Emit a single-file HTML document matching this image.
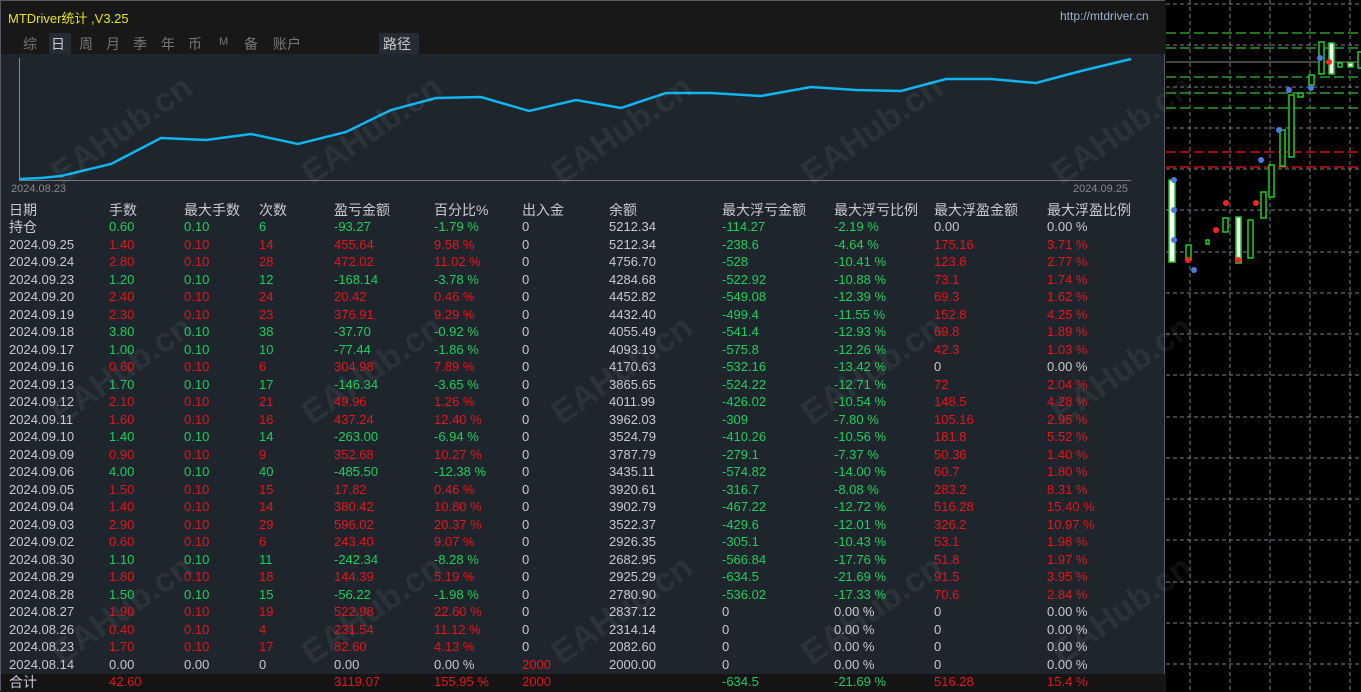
<!DOCTYPE html><html><head><meta charset="utf-8"><style>
*{margin:0;padding:0;box-sizing:border-box}
body{width:1361px;height:691px;background:#000;overflow:hidden;position:relative;font-family:"Liberation Sans","Noto Sans CJK SC",sans-serif;font-size:13px}
#p{position:absolute;left:0;top:0;width:1165px;height:691px;background:#1f252d;border:1px solid #55595f}
#tb{position:absolute;left:0;top:0;width:1165px;height:53px;background:#181818}
.t{position:absolute;white-space:nowrap}
.r{position:absolute;left:0;width:1165px;height:17.5px}
.r span{position:absolute;top:1px;line-height:16px}
.g{color:#19d05a}.d{color:#e8141a}.w{color:#c6cad2}
.wm{position:absolute;color:rgba(200,200,200,0.08);font-size:34px;font-weight:bold;transform:rotate(-35deg);white-space:nowrap}
</style></head><body>
<div id="p">
<div id="tb"></div>
<div class="t" style="left:7px;top:7px;color:#e6e600;font-size:13px">MTDriver统计 ,V3.25</div>
<div class="t" style="left:1059px;top:8px;color:#9bb4d0;font-size:12px">http://mtdriver.cn</div>
<div class="t" style="left:22px;top:33px;color:#777;font-size:14px;letter-spacing:0">综</div>
<div class="t" style="left:48px;top:32px;width:22px;height:21px;background:#262c36"></div>
<div class="t" style="left:50px;top:33px;color:#ccc;font-size:14px">日</div>
<div class="t" style="left:78px;top:33px;color:#777;font-size:14px">周</div>
<div class="t" style="left:105px;top:33px;color:#777;font-size:14px">月</div>
<div class="t" style="left:132px;top:33px;color:#777;font-size:14px">季</div>
<div class="t" style="left:160px;top:33px;color:#777;font-size:14px">年</div>
<div class="t" style="left:187px;top:33px;color:#777;font-size:14px">币</div>
<div class="t" style="left:218px;top:35px;color:#777;font-size:11px">M</div>
<div class="t" style="left:243px;top:33px;color:#777;font-size:14px">备</div>
<div class="t" style="left:272px;top:33px;color:#777;font-size:14px">账户</div>
<div class="t" style="left:378px;top:32px;width:40px;height:21px;background:#262c36"></div>
<div class="t" style="left:382px;top:33px;color:#ccc;font-size:14px">路径</div>
<svg class="t" style="left:0;top:0" width="1165" height="200">
<line x1="18.5" y1="57" x2="18.5" y2="180" stroke="#888" stroke-width="1"/>
<line x1="18" y1="179.5" x2="1130" y2="179.5" stroke="#777" stroke-width="1"/>
<polyline fill="none" stroke="#10b4f0" stroke-width="2.5" points="18,178 40,177 60,175 110,163 160,137 205,139 250,133 297,143 345,131 390,109 435,97 480,96 528,110 575,99 620,107 665,92 710,92 760,95 810,86 855,89 900,90 945,78 990,78 1035,82 1080,70 1130,58"/>
</svg>
<div class="t" style="left:10px;top:182px;color:#888;font-size:11px">2024.08.23</div>
<div class="t" style="left:1072px;top:182px;color:#888;font-size:11px">2024.09.25</div>
<div class="wm" style="left:40px;top:110px">EAHub.cn</div><div class="wm" style="left:290px;top:110px">EAHub.cn</div><div class="wm" style="left:540px;top:110px">EAHub.cn</div><div class="wm" style="left:790px;top:110px">EAHub.cn</div><div class="wm" style="left:1040px;top:110px">EAHub.cn</div>
<div class="wm" style="left:40px;top:350px">EAHub.cn</div><div class="wm" style="left:290px;top:350px">EAHub.cn</div><div class="wm" style="left:540px;top:350px">EAHub.cn</div><div class="wm" style="left:790px;top:350px">EAHub.cn</div><div class="wm" style="left:1040px;top:350px">EAHub.cn</div>
<div class="wm" style="left:40px;top:590px">EAHub.cn</div><div class="wm" style="left:290px;top:590px">EAHub.cn</div><div class="wm" style="left:540px;top:590px">EAHub.cn</div><div class="wm" style="left:790px;top:590px">EAHub.cn</div><div class="wm" style="left:1040px;top:590px">EAHub.cn</div>
<div class="r" style="top:673px;height:18px;background:#141414"></div>
<div id="rows"></div>
</div>
<svg style="position:absolute;left:1166px;top:0" width="195" height="691">
<g stroke="#7a8088" stroke-dasharray="4,3" stroke-width="1">
<line x1="24" y1="0" x2="24" y2="691"/><line x1="64" y1="0" x2="64" y2="691"/><line x1="104" y1="0" x2="104" y2="691"/><line x1="144" y1="0" x2="144" y2="691"/><line x1="184" y1="0" x2="184" y2="691"/>
<line x1="0" y1="4" x2="195" y2="4"/><line x1="0" y1="45" x2="195" y2="45"/><line x1="0" y1="87" x2="195" y2="87"/><line x1="0" y1="128" x2="195" y2="128"/><line x1="0" y1="169" x2="195" y2="169"/><line x1="0" y1="210" x2="195" y2="210"/><line x1="0" y1="252" x2="195" y2="252"/><line x1="0" y1="293" x2="195" y2="293"/><line x1="0" y1="334" x2="195" y2="334"/><line x1="0" y1="375" x2="195" y2="375"/><line x1="0" y1="417" x2="195" y2="417"/><line x1="0" y1="458" x2="195" y2="458"/><line x1="0" y1="499" x2="195" y2="499"/><line x1="0" y1="540" x2="195" y2="540"/><line x1="0" y1="582" x2="195" y2="582"/><line x1="0" y1="623" x2="195" y2="623"/><line x1="0" y1="664" x2="195" y2="664"/>
</g>
<g stroke="#2a9a2a" stroke-dasharray="10,4" stroke-width="1.5"><line x1="0" y1="33" x2="195" y2="33"/><line x1="0" y1="48" x2="195" y2="48"/><line x1="0" y1="77" x2="195" y2="77"/><line x1="0" y1="93" x2="195" y2="93"/><line x1="0" y1="108" x2="195" y2="108"/></g>
<line x1="0" y1="62" x2="195" y2="62" stroke="#888"/>
<g stroke="#d01010" stroke-dasharray="10,4" stroke-width="1.5"><line x1="0" y1="152" x2="195" y2="152"/><line x1="0" y1="167" x2="195" y2="167"/></g>
<g stroke="#1fd01f" stroke-width="1.5" fill="#000">
<rect x="3" y="180" width="6" height="82" fill="#fff"/><rect x="20" y="245" width="5" height="15"/><rect x="40" y="240" width="3" height="4"/><rect x="57" y="218" width="5" height="14"/><rect x="70" y="217" width="5" height="46" fill="#fff"/><rect x="82" y="220" width="5" height="38"/><rect x="95" y="192" width="5" height="26"/><rect x="103" y="165" width="5" height="32"/><rect x="114" y="130" width="5" height="36"/><rect x="123" y="95" width="5" height="62"/><rect x="132" y="93" width="5" height="4"/><rect x="143" y="75" width="5" height="10"/><rect x="153" y="42" width="5" height="32"/><rect x="163" y="43" width="5" height="31" fill="#fff"/><rect x="172" y="63" width="4" height="4"/><rect x="182" y="63" width="5" height="4" fill="#fff"/><rect x="192" y="52" width="5" height="16"/>
</g>
<g fill="#4a7ae0"><circle cx="8" cy="180" r="3"/><circle cx="8" cy="210" r="3"/><circle cx="8" cy="240" r="3"/><circle cx="28" cy="270" r="3"/><circle cx="95" cy="160" r="3"/><circle cx="113" cy="130" r="3"/><circle cx="123" cy="90" r="3"/><circle cx="145" cy="88" r="3"/><circle cx="154" cy="58" r="3"/></g>
<g fill="#ff2020"><circle cx="22" cy="260" r="3"/><circle cx="60" cy="203" r="3"/><circle cx="50" cy="230" r="3"/><circle cx="72" cy="260" r="3"/><circle cx="90" cy="203" r="3"/><circle cx="163" cy="62" r="3"/></g>
</svg>
<script>
var D=[
["持仓","0.60","0.10","6","-93.27","-1.79 %","0","5212.34","-114.27","-2.19 %","0.00","0.00 %"],
["2024.09.25","1.40","0.10","14","455.64","9.58 %","0","5212.34","-238.6","-4.64 %","175.16","3.71 %"],
["2024.09.24","2.80","0.10","28","472.02","11.02 %","0","4756.70","-528","-10.41 %","123.8","2.77 %"],
["2024.09.23","1.20","0.10","12","-168.14","-3.78 %","0","4284.68","-522.92","-10.88 %","73.1","1.74 %"],
["2024.09.20","2.40","0.10","24","20.42","0.46 %","0","4452.82","-549.08","-12.39 %","69.3","1.62 %"],
["2024.09.19","2.30","0.10","23","376.91","9.29 %","0","4432.40","-499.4","-11.55 %","152.8","4.25 %"],
["2024.09.18","3.80","0.10","38","-37.70","-0.92 %","0","4055.49","-541.4","-12.93 %","69.8","1.89 %"],
["2024.09.17","1.00","0.10","10","-77.44","-1.86 %","0","4093.19","-575.8","-12.26 %","42.3","1.03 %"],
["2024.09.16","0.60","0.10","6","304.98","7.89 %","0","4170.63","-532.16","-13.42 %","0","0.00 %"],
["2024.09.13","1.70","0.10","17","-146.34","-3.65 %","0","3865.65","-524.22","-12.71 %","72","2.04 %"],
["2024.09.12","2.10","0.10","21","49.96","1.26 %","0","4011.99","-426.02","-10.54 %","148.5","4.28 %"],
["2024.09.11","1.60","0.10","16","437.24","12.40 %","0","3962.03","-309","-7.80 %","105.16","2.95 %"],
["2024.09.10","1.40","0.10","14","-263.00","-6.94 %","0","3524.79","-410.26","-10.56 %","181.8","5.52 %"],
["2024.09.09","0.90","0.10","9","352.68","10.27 %","0","3787.79","-279.1","-7.37 %","50.36","1.40 %"],
["2024.09.06","4.00","0.10","40","-485.50","-12.38 %","0","3435.11","-574.82","-14.00 %","60.7","1.80 %"],
["2024.09.05","1.50","0.10","15","17.82","0.46 %","0","3920.61","-316.7","-8.08 %","283.2","8.31 %"],
["2024.09.04","1.40","0.10","14","380.42","10.80 %","0","3902.79","-467.22","-12.72 %","516.28","15.40 %"],
["2024.09.03","2.90","0.10","29","596.02","20.37 %","0","3522.37","-429.6","-12.01 %","326.2","10.97 %"],
["2024.09.02","0.60","0.10","6","243.40","9.07 %","0","2926.35","-305.1","-10.43 %","53.1","1.98 %"],
["2024.08.30","1.10","0.10","11","-242.34","-8.28 %","0","2682.95","-566.84","-17.76 %","51.8","1.97 %"],
["2024.08.29","1.80","0.10","18","144.39","5.19 %","0","2925.29","-634.5","-21.69 %","91.5","3.95 %"],
["2024.08.28","1.50","0.10","15","-56.22","-1.98 %","0","2780.90","-536.02","-17.33 %","70.6","2.84 %"],
["2024.08.27","1.90","0.10","19","522.98","22.60 %","0","2837.12","0","0.00 %","0","0.00 %"],
["2024.08.26","0.40","0.10","4","231.54","11.12 %","0","2314.14","0","0.00 %","0","0.00 %"],
["2024.08.23","1.70","0.10","17","82.60","4.13 %","0","2082.60","0","0.00 %","0","0.00 %"],
["2024.08.14","0.00","0.00","0","0.00","0.00 %","2000","2000.00","0","0.00 %","0","0.00 %"],
["合计","42.60","","","3119.07","155.95 %","2000","","-634.5","-21.69 %","516.28","15.4 %"]];
var X=[8,108,183,258,333,433,521,608,721,833,933,1046];
var H=["日期","手数","最大手数","次数","盈亏金额","百分比%","出入金","余额","最大浮亏金额","最大浮亏比例","最大浮盈金额","最大浮盈比例"];
var h='<div class="r" style="top:200px">';H.forEach(function(t,i){h+='<span class="w" style="left:'+X[i]+'px;font-size:14px">'+t+'</span>'});h+='</div>';
D.forEach(function(r,k){var top=217+k*17.5;var pos=parseFloat(r[4])>0,z=parseFloat(r[4])==0;
var c=z?'w':(pos?'d':'g');h+='<div class="r" style="top:'+top+'px">';
r.forEach(function(t,i){var cl;
if(i==0)cl='w';else if(i==7)cl='w';else if(i==6)cl=(t=="2000")?'d':'w';
else if(i==8||i==9)cl=(parseFloat(t)<0)?'g':'w';
else if(i==10||i==11)cl=(parseFloat(t)>0)?'d':'w';
else cl=c;
var fs=(i==0&&(k==0||k==26))?'font-size:14px;':'';
h+='<span class="'+cl+'" style="left:'+X[i]+'px;'+fs+'">'+t+'</span>'});h+='</div>'});
document.getElementById('rows').innerHTML=h;
</script>
</body></html>
